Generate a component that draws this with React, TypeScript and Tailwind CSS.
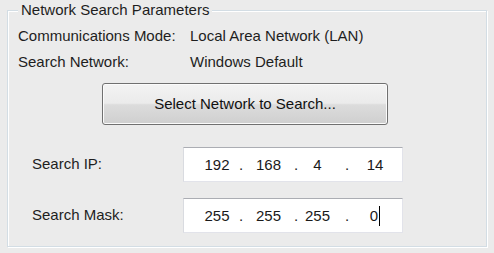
import React from "react";

function IpField({ parts, caret }: { parts: string[]; caret?: boolean }) {
  return (
    <div className="flex h-[35px] w-[220px] items-center border border-[#e2e3ea] border-t-[#abadb3] border-l-[#d9dbe0] bg-white pl-[13px] text-[15px] leading-[18px] text-[#1a1a1a]">
      <span className="w-[40px] text-center">{parts[0]}</span>
      <span className="w-[8px] text-center">.</span>
      <span className="w-[47px] text-center">{parts[1]}</span>
      <span className="w-[8px] text-center">.</span>
      <span className="w-[35px] text-center">{parts[2]}</span>
      <span className="w-[24px] text-center">.</span>
      <span className="flex w-[32px] items-center justify-center">
        {parts[3]}
        {caret && <span className="ml-[1px] inline-block h-[20px] w-[1px] bg-black" />}
      </span>
    </div>
  );
}

export default function App() {
  return (
    <div
      className="h-[253px] w-[494px] bg-[#ebebeb] pl-[7px] pt-[10px] text-[15px] text-[#1e1e1e]"
      style={{ fontFamily: '"Liberation Sans", Arial, sans-serif' }}
    >
      <div className="relative h-[237px] w-[480px] border border-[#d3dde4] shadow-[1px_1px_0_#ffffff,inset_1px_1px_0_#ffffff]">
        <span className="absolute left-[10px] top-[-10px] bg-[#ebebeb] px-[3px] leading-[18px]">
          Network Search Parameters
        </span>
        <div className="flex flex-col">
          <div className="mt-[15px] flex h-[20px] items-center pl-[10px]">
            <span className="w-[172px]">Communications Mode:</span>
            <span>Local Area Network (LAN)</span>
          </div>
          <div className="mt-[6px] flex h-[20px] items-center pl-[10px]">
            <span className="w-[172px]">Search Network:</span>
            <span>Windows Default</span>
          </div>
          <div className="ml-[94px] mt-[11px] flex h-[42px] w-[286px] items-center justify-center rounded-[3px] border border-[#707070] bg-[linear-gradient(#f3f3f3_0%,#ebebeb_48%,#dcdcdc_52%,#cfcfcf_100%)] text-[#111] shadow-[inset_0_0_0_1px_#fbfbfb]">
            Select Network to Search...
          </div>
          <div className="mt-[22px] flex items-center pl-[24px]">
            <span className="w-[151px]">Search IP:</span>
            <IpField parts={["192", "168", "4", "14"]} />
          </div>
          <div className="mt-[16px] flex items-center pl-[24px]">
            <span className="w-[151px]">Search Mask:</span>
            <IpField parts={["255", "255", "255", "0"]} caret />
          </div>
        </div>
      </div>
    </div>
  );
}
